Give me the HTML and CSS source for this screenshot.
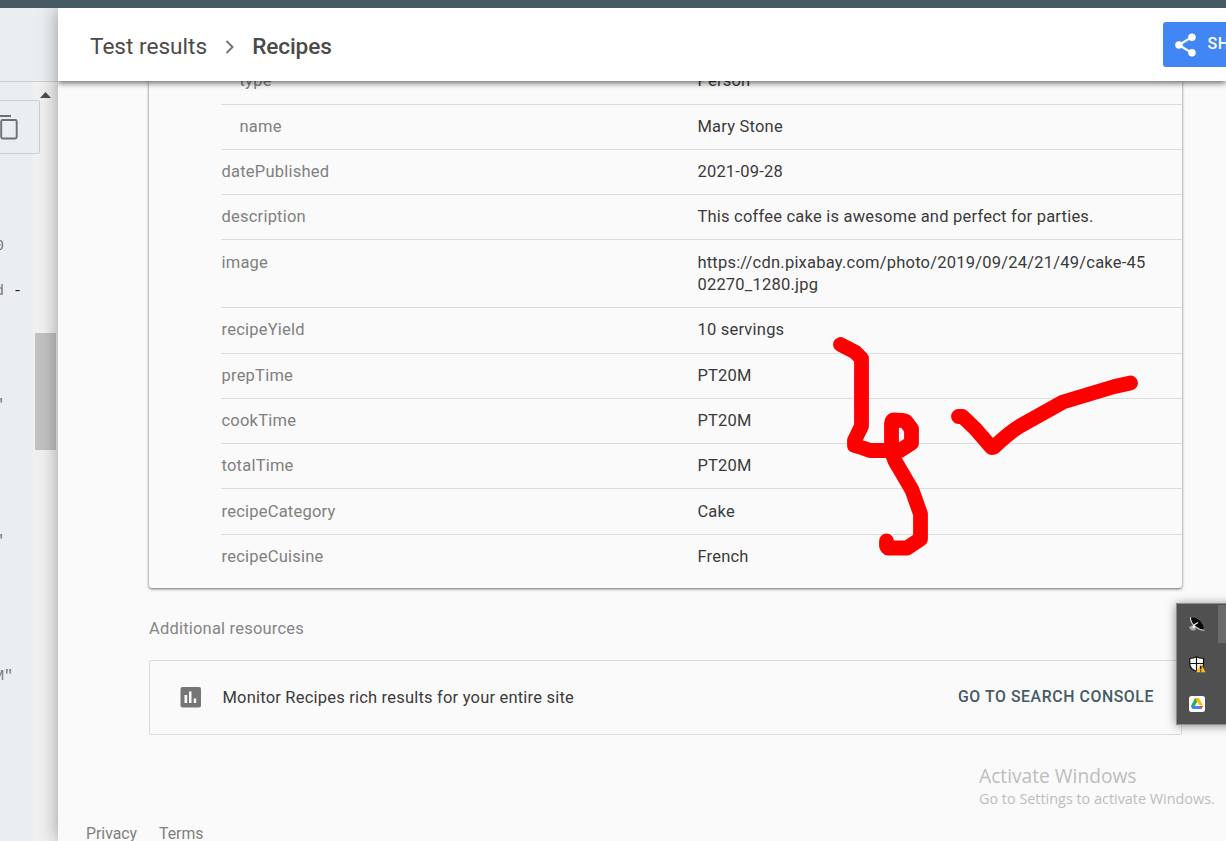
FILE: index.html
```html
<!DOCTYPE html>
<html lang="en">
<head>
<meta charset="utf-8">
<title>Test results</title>
<link rel="stylesheet" href="styles.css">
</head>
<body>
<div class="topbar"></div>
<div class="main">
  <aside class="source">
    <div class="source-head"></div>
    <div class="source-body">
      <pre class="code">0

<span>d</span> <b>-</b>




"





"





M"</pre>
      <div class="scrollbar">
        <svg class="arrow" width="11" height="6" viewBox="0 0 11 6"><path d="M5.5 0 11 6H0z" fill="#4d4d4d"/></svg>
        <div class="thumb"></div>
      </div>
      <div class="copy">
        <svg width="24" height="28" viewBox="0 0 24 28" fill="none" stroke="#6e7173" stroke-width="1.9"><path d="M0 3h15"/><rect x="5.200" y="7" width="15.500" height="18.500" rx="1.500"/></svg>
      </div>
    </div>
  </aside>
  <section class="panel">
    <header class="head">
      <span class="crumb">Test results</span>
      <svg class="chev" width="10" height="14" viewBox="0 0 10 14" fill="none" stroke="#757575" stroke-width="2"><path d="M1.500 1l6 6-6 6"/></svg>
      <span class="crumb current">Recipes</span>
      <button class="share">
        <svg width="22" height="24" viewBox="0 0 22 24" fill="#fff"><path d="M17 4 4 12l13 8" fill="none" stroke="#fff" stroke-width="2.300"/><circle cx="17.300" cy="4" r="3.800"/><circle cx="4" cy="12" r="3.800"/><circle cx="17.300" cy="20" r="3.800"/></svg>
        <span>SHARE</span>
      </button>
    </header>
    <div class="content">
      <div class="card">
        <dl class="props">
          <div class="row first sub"><dt>type</dt><dd>Person</dd></div>
          <div class="row sub"><dt>name</dt><dd>Mary Stone</dd></div>
          <div class="row"><dt>datePublished</dt><dd>2021-09-28</dd></div>
          <div class="row"><dt>description</dt><dd>This coffee cake is awesome and perfect for parties.</dd></div>
          <div class="row double"><dt>image</dt><dd>https://cdn.pixabay.com/photo/2019/09/24/21/49/cake-45<br>02270_1280.jpg</dd></div>
          <div class="row tall"><dt>recipeYield</dt><dd>10 servings</dd></div>
          <div class="row"><dt>prepTime</dt><dd>PT20M</dd></div>
          <div class="row"><dt>cookTime</dt><dd>PT20M</dd></div>
          <div class="row"><dt>totalTime</dt><dd>PT20M</dd></div>
          <div class="row tall low"><dt>recipeCategory</dt><dd>Cake</dd></div>
          <div class="row last"><dt>recipeCuisine</dt><dd>French</dd></div>
        </dl>
      </div>
      <h2 class="subtitle">Additional resources</h2>
      <div class="resource">
        <svg width="21" height="21" viewBox="0 0 21 21"><rect x=".5" width="20.500" height="20.500" rx="2" fill="#757575"/><path d="M4.500 8h2.700v8H4.500zM9 4.500h2.500V16H9zM13.700 11.500h2.500V16h-2.500z" fill="#fafafa"/></svg>
        <span class="resource-text">Monitor Recipes rich results for your entire site</span>
        <a class="action">GO TO SEARCH CONSOLE</a>
      </div>
      <footer class="foot"><span>Privacy</span><span>Terms</span></footer>
    </div>
  </section>
</div>

<svg class="ink" width="1226" height="841" viewBox="0 0 1226 841" fill="none" stroke="#f00" stroke-width="14.800" stroke-linecap="round" stroke-linejoin="round">
  <path d="M840.500 344.500 855 352l6.500 6.500V426l-7 14.500v5l8.500 2.500 7 2.500h30l11.500-7.500v-14l-5.500-7.500q-4-1.500-11.500-1.500-3 0-3 3.500v28l3.500 9.500 17 29 8.500 24v25l-13.500 9h-19l-1.500-2v-5"/>
  <path d="M958.500 416.500h4l13 12.500 16 18.500q2 0 3-1 15-14 25.500-20.500l43-24 51.500-15.500 16-3.500"/>
</svg>

<div class="watermark"><p class="wm-title">Activate Windows</p><p class="wm-text">Go to Settings to activate Windows.</p></div>

<div class="tray">
  <div class="tray-icons">
    <svg width="16" height="16" viewBox="0 0 16 16"><path d="M1.500 1Q6-.5 11 4q5 5 4.500 10-4 1-8.500-2.500Q.5 7 1.500 1z" fill="#080808"/><path d="M1.500 1Q1 6 6 10.500q5 4 9.500 3.500" fill="none" stroke="#ccc" stroke-width="1.200"/><path d="M1.500 1Q6-.5 11 4q5 5 4.500 10" fill="none" stroke="#777" stroke-width=".7"/><path d="M5 9l4-2.500" stroke="#eee" stroke-width="1.200"/><path d="M0 11l3-1.500L7 12l-1 2.500H3L1 13z" fill="#aaa"/><circle cx="5" cy="10.500" r="1.500" fill="#f2f2f2"/></svg>
    <svg width="17" height="17" viewBox="0 0 17 17"><path d="M7.500 .8Q10 2.500 14.500 2.500V8q0 5-7 7.500Q.8 13 .8 8V2.500Q5 2.500 7.500.8z" fill="#fff" stroke="#111" stroke-width="1.200"/><path d="M7.500 1v14M1 7.500h13.500" stroke="#111" stroke-width="1.200"/><path d="M11.700 7.500 16.500 16.300H7z" fill="#ffc21c"/><path d="M11.700 10v3.300M11.700 14.200v1.300" stroke="#111" stroke-width="1.400"/></svg>
    <svg width="16" height="16" viewBox="0 0 16 16"><rect width="16" height="16" rx="2.500" fill="#fff"/><path d="M6 2h2.500l1 2-5 8H3L2 10z" fill="#34a853"/><path d="M6 2h4l4 7.500h-3.500z" fill="#fbbc04"/><path d="M10 10h4l-1.500 3z" fill="#ea4335"/><path d="M2 10.500 4.500 10H11l1.500 3h-9z" fill="#4285f4"/><path d="M8 6.200 10 10H6z" fill="#fff"/></svg>
  </div>
  <div class="tray-hover"></div>
</div>
</body>
</html>
```
FILE: styles.css
```css
* { box-sizing: border-box; }
body {
  margin: 0;
  width: 1226px;
  height: 841px;
  overflow: hidden;
  position: relative;
  font-family: Roboto, sans-serif;
  background: #fafafa;
}
.topbar { height: 8px; background: #455a64; }
.main { display: flex; height: 833px; }

.source {
  width: 58px;
  flex: none;
  display: flex;
  flex-direction: column;
  background: #eaeef1;
}
.source-head { height: 74px; border-bottom: 1px solid #cbcfd2; }
.source-body { flex: 1; display: flex; position: relative; overflow: hidden; }
.code {
  margin: 0 0 0 -5px;
  padding-top: 154px;
  width: 38px;
  font: 15px/22.65px "Liberation Mono", monospace;
  color: #777;
}
.code b { color: #222; font-weight: 400; }
.scrollbar { width: 25px; background: #f0f0f0; padding: 10px 2px 0; }
.arrow { display: block; margin-left: 5px; }
.thumb { height: 117px; margin-top: 235px; background: #c1c1c1; }
.copy {
  position: absolute;
  left: 0;
  top: 18px;
  width: 40px;
  height: 54px;
  border: 1px solid #c9cfd3;
  border-left: 0;
  border-radius: 0 2px 2px 0;
  background: #eaeef1;
  overflow: hidden;
}
.copy svg { display: block; margin: 12px 0 0 -4px; }

.panel {
  flex: 1;
  min-width: 0;
  display: flex;
  flex-direction: column;
  position: relative;
  background: #fafafa;
  box-shadow: 0 0 18px rgba(0, 0, 0, .36);
  clip-path: inset(0 0 0 -30px);
}
.head {
  height: 73px;
  flex: none;
  display: flex;
  align-items: center;
  padding: 0 0 0 32px;
  background: #fff;
  box-shadow: 0 2px 6px rgba(0, 0, 0, .6);
  clip-path: inset(0 0 -20px 0);
  position: relative;
  z-index: 1;
}
.crumb { font-size: 22.600px; color: #4a4a4a; line-height: 30px; padding-top: 4px; }
.chev { margin: 5px 17px 0 18px; }
.current { font-weight: 500; letter-spacing: -.1px; }
.share {
  flex: none;
  display: flex;
  align-items: center;
  gap: 11px;
  width: 110px;
  height: 45px;
  margin: 0 -47px 0 auto;
  padding: 0 12px;
  border: 0;
  border-radius: 3px;
  background: #4285f4;
  color: #fff;
  font: 500 16px Roboto, sans-serif;
  letter-spacing: .5px;
}
.share span { margin-top: -2px; }

.content { flex: 1; min-height: 0; overflow: hidden; padding-left: 91px; }
.card {
  width: 1033px;
  height: 507px;
  padding-left: 72px;
  border-radius: 0 0 3px 3px;
  background: #fafafa;
  box-shadow: 0 1px 3px rgba(0, 0, 0, .6);
}
.props { margin: 0; font-size: 16.500px; letter-spacing: .22px; line-height: 22px; }
.row { display: flex; height: 45px; padding-top: 11px; border-bottom: 1px solid #dcdcdc; }
.row.first { height: 24px; padding: 0; }
.row.first dt, .row.first dd { margin-top: -11px; }
.row.tall { height: 46px; }
.row.double { height: 68px; padding-top: 12px; }
.row.low { padding-top: 12px; }
.row.last { border: 0; }
.row dt { width: 476.400px; flex: none; padding-left: .5px; color: #808080; }
.row.sub dt { padding-left: 18.500px; }
.row dd { margin: 0; color: #3a3a3a; white-space: nowrap; }
.subtitle { margin: 30px 0 0; font-size: 16.500px; font-weight: 400; line-height: 22px; letter-spacing: .2px; color: #858585; }
.resource {
  width: 1033px;
  height: 75px;
  margin-top: 20px;
  padding: 0 27px 0 30px;
  display: flex;
  align-items: center;
  border: 1px solid #dadada;
  border-radius: 2px;
}
.resource-text { margin-left: 21.500px; font-size: 16.500px; letter-spacing: .2px; color: #3a3a3a; }
.action { margin: -2px 0 0 auto; font-size: 15.800px; font-weight: 500; letter-spacing: .6px; color: #455a64; }
.foot { display: flex; gap: 22px; margin: 88px 0 0 -63px; font-size: 15.800px; line-height: 22px; color: #808080; }

.ink { position: absolute; left: 0; top: 0; }

.watermark { position: absolute; left: 979px; top: 764px; font-family: "Open Sans", sans-serif; color: #bdbdbd; white-space: nowrap; }
.watermark p { margin: 0; }
.wm-title { font-size: 19.200px; line-height: 24px; }
.wm-text { font-size: 14.400px; line-height: 22px; }

.tray {
  position: absolute;
  left: 1176px;
  top: 603px;
  width: 60px;
  height: 122px;
  display: flex;
  border: 1px solid #8c8c8c;
  background: #505050;
  box-shadow: 0 1px 9px rgba(0, 0, 0, .45);
}
.tray-icons { width: 41px; flex: none; padding: 12px 0 0 12px; display: flex; flex-direction: column; gap: 23.500px; }
.tray-icons svg { display: block; flex: none; }
.tray-hover { width: 18px; height: 38px; margin-top: 1px; background: #696969; }
```
